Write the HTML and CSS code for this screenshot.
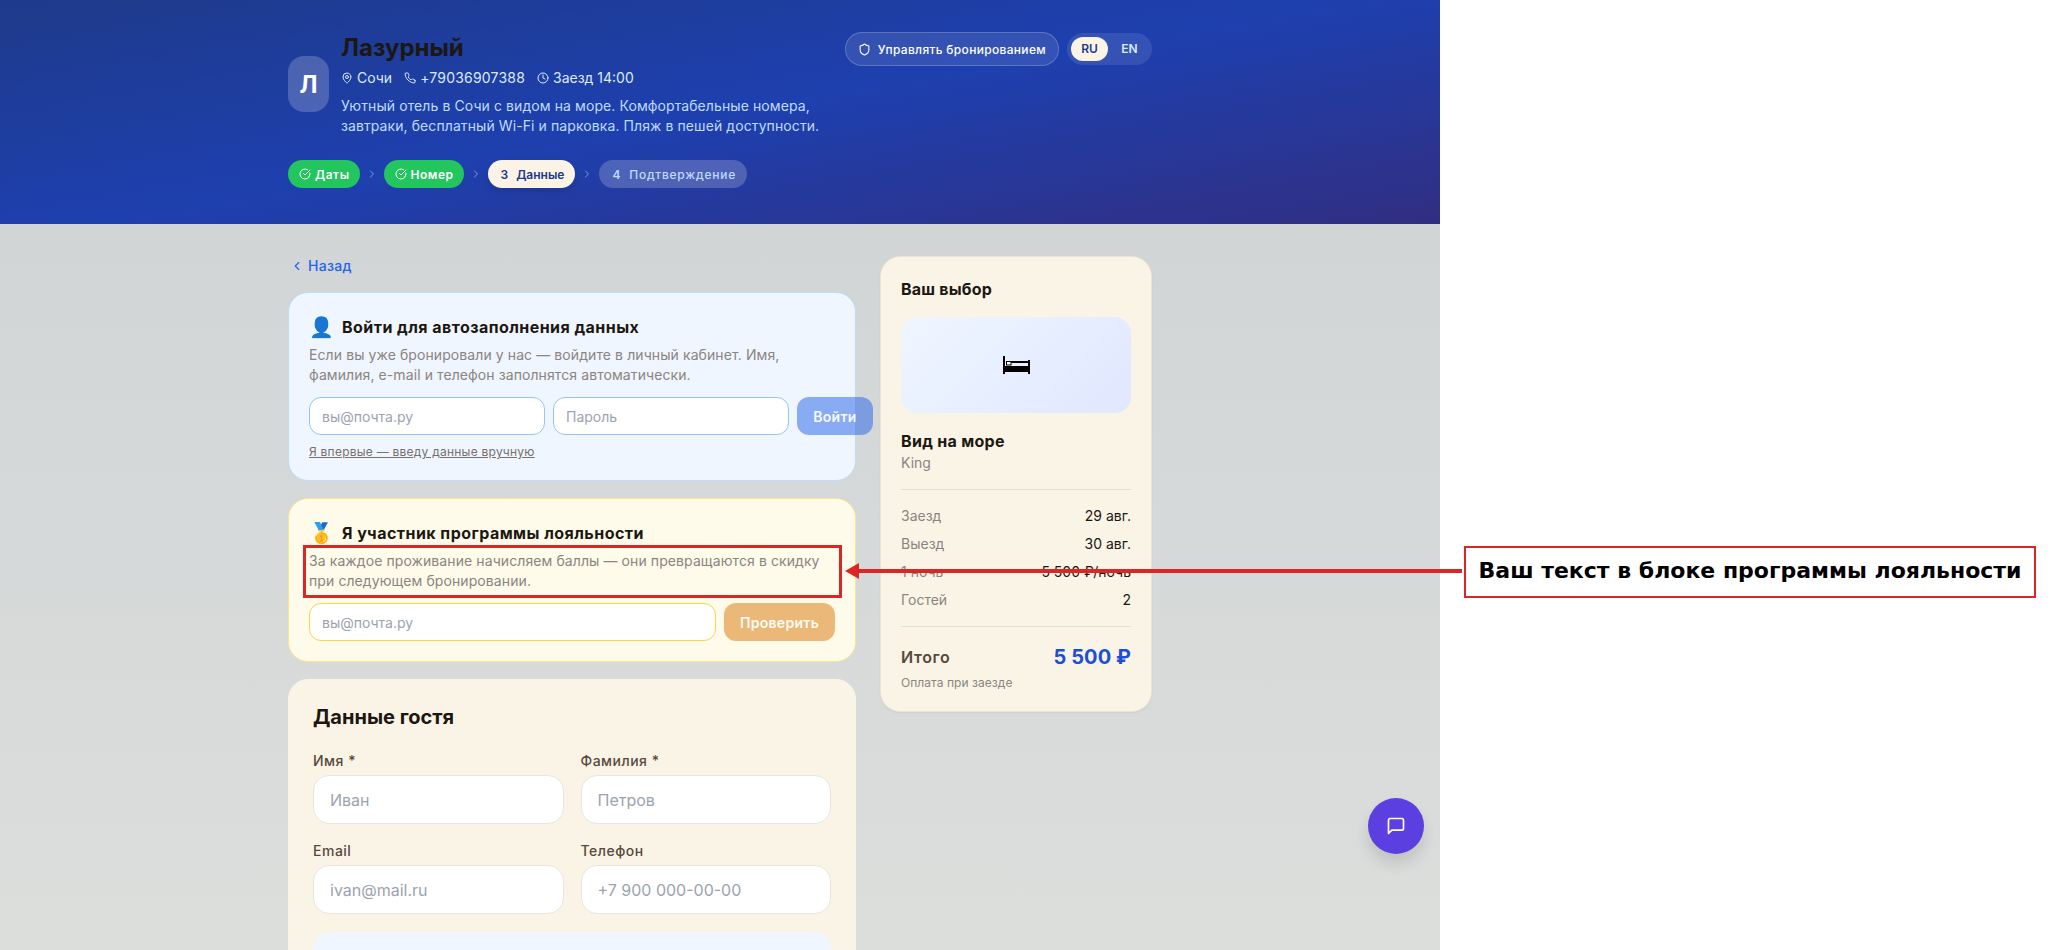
FILE: index.html
```html
<!DOCTYPE html>
<html lang="ru">
<head>
  <meta charset="UTF-8" />
  <meta name="viewport" content="width=device-width, initial-scale=1.0"/>
  <title>Лазурный</title>
  <link rel="stylesheet" href="styles.css">
</head>
<body>

  <div class="app">
    <header class="hero">
      <div class="wrap">
        <div class="hero-top">
          <div class="hotel">
            <div class="avatar">Л</div>
            <div class="hotel-info">
              <h1>Лазурный</h1>
              <div class="meta">
                <span class="meta-item">
                  <svg class="icon" viewBox="0 0 24 24"><path d="M20 10c0 4.993-5.539 10.193-7.399 11.799a1 1 0 0 1-1.202 0C9.539 20.193 4 14.993 4 10a8 8 0 0 1 16 0"/><circle cx="12" cy="10" r="3"/></svg>
                  Сочи
                </span>
                <span class="meta-item phone">
                  <svg class="icon" viewBox="0 0 24 24"><path d="M22 16.92v3a2 2 0 0 1-2.18 2 19.79 19.79 0 0 1-8.63-3.07 19.5 19.5 0 0 1-6-6 19.79 19.79 0 0 1-3.07-8.67A2 2 0 0 1 4.11 2h3a2 2 0 0 1 2 1.72 12.84 12.84 0 0 0 .7 2.81 2 2 0 0 1-.45 2.11L8.09 9.91a16 16 0 0 0 6 6l1.27-1.27a2 2 0 0 1 2.11-.45 12.84 12.84 0 0 0 2.81.7A2 2 0 0 1 22 16.92z"/></svg>
                  +79036907388
                </span>
                <span class="meta-item">
                  <svg class="icon" viewBox="0 0 24 24"><circle cx="12" cy="12" r="10"/><polyline points="12 6 12 12 16 14"/></svg>
                  Заезд 14:00
                </span>
              </div>
              <p class="hotel-desc">Уютный отель в Сочи с видом на море. Комфортабельные номера, завтраки, бесплатный Wi-Fi и парковка. Пляж в пешей доступности.</p>
            </div>
          </div>
          <div class="hero-actions">
            <a class="manage-btn">
              <svg class="icon" viewBox="0 0 24 24"><path d="M20 13c0 5-3.5 7.5-7.66 8.95a1 1 0 0 1-.67-.01C7.5 20.5 4 18 4 13V6a1 1 0 0 1 1-1c2 0 4.5-1.2 6.24-2.72a1.17 1.17 0 0 1 1.52 0C14.51 3.81 17 5 19 5a1 1 0 0 1 1 1z"/></svg>
              Управлять бронированием
            </a>
            <div class="lang">
              <span class="lang-item active">RU</span>
              <span class="lang-item">EN</span>
            </div>
          </div>
        </div>

        <div class="steps">
          <span class="step done">
            <svg class="icon" viewBox="0 0 24 24"><path d="M21.801 10A10 10 0 1 1 17 3.335"/><path d="m9 11 3 3L22 4"/></svg>
            Даты
          </span>
          <svg class="icon step-arrow" viewBox="0 0 24 24"><path d="m9 18 6-6-6-6"/></svg>
          <span class="step done">
            <svg class="icon" viewBox="0 0 24 24"><path d="M21.801 10A10 10 0 1 1 17 3.335"/><path d="m9 11 3 3L22 4"/></svg>
            Номер
          </span>
          <svg class="icon step-arrow" viewBox="0 0 24 24"><path d="m9 18 6-6-6-6"/></svg>
          <span class="step current"><b>3</b> Данные</span>
          <svg class="icon step-arrow" viewBox="0 0 24 24"><path d="m9 18 6-6-6-6"/></svg>
          <span class="step todo"><b>4</b> Подтверждение</span>
        </div>
      </div>
    </header>

    <main class="wrap content">
      <div class="main-col">
        <a class="back">
          <svg class="icon" viewBox="0 0 24 24"><path d="m15 18-6-6 6-6"/></svg>
          Назад
        </a>

        <section class="card login-card">
          <div class="card-title"><span class="emoji">👤</span> Войти для автозаполнения данных</div>
          <p class="card-text">Если вы уже бронировали у нас — войдите в личный кабинет. Имя, фамилия, e-mail и телефон заполнятся автоматически.</p>
          <div class="login-row">
            <input type="email" placeholder="вы@почта.ру">
            <input type="password" placeholder="Пароль">
            <button type="button" class="btn-blue">Войти</button>
          </div>
          <a class="manual-link">Я впервые — введу данные вручную</a>
        </section>

        <section class="card loyalty-card">
          <div class="card-title"><span class="emoji">🥇</span> Я участник программы лояльности</div>
          <p class="card-text">За каждое проживание начисляем баллы — они превращаются в скидку при следующем бронировании.</p>
          <div class="loyalty-row">
            <input type="email" placeholder="вы@почта.ру">
            <button type="button" class="btn-amber">Проверить</button>
          </div>
        </section>

        <section class="card guest-card">
          <h2>Данные гостя</h2>
          <div class="form-grid">
            <label>Имя *<input type="text" placeholder="Иван"></label>
            <label>Фамилия *<input type="text" placeholder="Петров"></label>
            <label>Email<input type="email" placeholder="ivan@mail.ru"></label>
            <label>Телефон<input type="tel" placeholder="+7 900 000-00-00"></label>
          </div>
          <div class="guest-note"></div>
        </section>
      </div>

      <aside class="summary">
        <h3>Ваш выбор</h3>
        <div class="room-pic">
          <svg class="bed" viewBox="0 0 27 18">
            <rect x="0" y="0" width="2" height="18"/>
            <rect x="25" y="4" width="2" height="14"/>
            <rect x="0" y="10" width="27" height="6"/>
            <rect x="8" y="5" width="17" height="2"/>
            <rect class="pillow" x="3.5" y="5.5" width="4.5" height="3.5"/>
          </svg>
        </div>
        <div class="room-name">Вид на море</div>
        <div class="room-bed">King</div>
        <div class="rows">
          <div class="row"><span>Заезд</span><span class="val">29 авг.</span></div>
          <div class="row"><span>Выезд</span><span class="val">30 авг.</span></div>
          <div class="row"><span>1 ночь</span><span class="val">5 500 ₽/ночь</span></div>
          <div class="row"><span>Гостей</span><span class="val">2</span></div>
        </div>
        <div class="total">
          <span>Итого</span>
          <span class="total-sum">5 500 ₽</span>
        </div>
        <div class="pay-note">Оплата при заезде</div>
      </aside>
    </main>

    <button type="button" class="chat-btn">
      <svg class="icon" viewBox="0 0 24 24"><path d="M21 15a2 2 0 0 1-2 2H7l-4 4V5a2 2 0 0 1 2-2h14a2 2 0 0 1 2 2z"/></svg>
    </button>
  </div>

  <!-- annotation drawn over the screenshot -->
  <div class="note-frame"></div>
  <div class="note-line"></div>
  <div class="note-head"></div>
  <div class="note-label">Ваш текст в блоке программы лояльности</div>

</body>
</html>
```

FILE: styles.css
```css
* {
  box-sizing: border-box;
}

html, body {
  margin: 0;
  height: 950px;
  overflow: hidden;
  background: #fff;
}

body {
  position: relative;
  font-family: Inter, "Noto Sans", sans-serif;
  color: #1c1710;
  letter-spacing: 0.09px;
}

.app {
  position: relative;
  width: 1440px;
  height: 950px;
  overflow: hidden;
  background: linear-gradient(180deg, #d1d5d6 224px, #dcdedc 950px);
}

.wrap {
  width: 864px;
  margin: 0 auto;
}

.icon {
  width: 12px;
  height: 12px;
  flex: none;
  fill: none;
  stroke: currentColor;
  stroke-width: 2;
  stroke-linecap: round;
  stroke-linejoin: round;
}

/* header */
.hero {
  height: 224px;
  padding-top: 32px;
  background: linear-gradient(170deg, #1e3a8a 0%, #1e40af 50%, #312e81 100%);
}

.hero-top {
  display: flex;
  justify-content: space-between;
  align-items: flex-start;
}

.hotel {
  display: flex;
  align-items: center;
  gap: 12px;
}

.avatar {
  width: 41px;
  height: 56px;
  border-radius: 16px;
  background: rgba(255,255,255,0.2);
  color: #fff;
  font-size: 24px;
  font-weight: 700;
  display: flex;
  align-items: center;
  justify-content: center;
}

h1 {
  margin: 0;
  font-size: 24px;
  line-height: 32px;
  font-weight: 700;
  letter-spacing: 0;
  color: #1c1710;
}

.meta {
  display: flex;
  gap: 12px;
  margin-top: 4px;
  font-size: 14px;
  line-height: 20px;
  letter-spacing: 0;
  color: #dbeafe;
}

.meta-item {
  display: flex;
  align-items: center;
  gap: 4px;
}

.phone {
  letter-spacing: 0.2px;
}

.hotel-desc {
  width: 490px;
  margin: 8px 0 0;
  font-size: 14px;
  line-height: 20px;
  color: #bfdbfe;
}

.hero-actions {
  display: flex;
  align-items: center;
  gap: 8px;
}

.manage-btn {
  display: flex;
  align-items: center;
  gap: 7px;
  height: 34px;
  padding: 0 12px;
  border: 1px solid rgba(255,255,255,0.2);
  border-radius: 17px;
  background: rgba(255,255,255,0.1);
  color: #fff;
  font-size: 12px;
  font-weight: 500;
  letter-spacing: 0.32px;
}

.manage-btn .icon {
  width: 13px;
  height: 13px;
}

.lang {
  display: flex;
  align-items: center;
  gap: 3px;
  height: 32px;
  padding: 4px;
  border-radius: 16px;
  background: rgba(255,255,255,0.1);
  font-size: 12px;
  font-weight: 600;
  letter-spacing: 0;
  color: #dbeafe;
}

.lang-item {
  width: 37px;
  height: 24px;
  line-height: 24px;
  text-align: center;
  border-radius: 12px;
}

.lang-item.active {
  background: #faf3e6;
  color: #1e3a8a;
}

.steps {
  display: flex;
  align-items: center;
  gap: 6px;
  margin-top: 24px;
}

.step {
  display: flex;
  align-items: center;
  gap: 4px;
  height: 28px;
  padding: 0 10px 0 11px;
  border-radius: 14px;
  font-size: 12px;
  font-weight: 600;
  letter-spacing: 0.5px;
}

.step b {
  margin-right: 4px;
  font-weight: 600;
}

.step.done {
  background: #22c55e;
  color: #fff;
}

.step.current {
  padding: 0 11px 0 13px;
  background: #faf3e6;
  color: #1e3a8a;
  letter-spacing: 0;
  box-shadow: 0 4px 6px rgba(0,0,0,0.1);
}

.step.todo {
  padding: 0 11px 0 13px;
  background: rgba(255,255,255,0.2);
  color: #bfdbfe;
  font-weight: 500;
  letter-spacing: 0.75px;
}

.step-arrow {
  color: rgba(191,219,254,0.6);
}

/* content */
.content {
  display: grid;
  grid-template-columns: 568px 272px;
  gap: 24px;
  align-items: start;
  padding-top: 32px;
}

.back {
  display: flex;
  align-items: center;
  gap: 4px;
  height: 19px;
  margin-bottom: 17px;
  padding-left: 2px;
  font-size: 14px;
  font-weight: 500;
  letter-spacing: 0.3px;
  color: #2563eb;
}

.back .icon {
  width: 14px;
  height: 14px;
}

.card {
  margin-bottom: 17px;
  padding: 20px;
  border: 1px solid transparent;
  border-radius: 20px;
}

.card-title {
  display: flex;
  align-items: center;
  gap: 8px;
  height: 28px;
  font-size: 16px;
  line-height: 28px;
  font-weight: 700;
  letter-spacing: 0.45px;
  color: #1c1710;
}

.emoji {
  font-size: 20px;
  letter-spacing: 0;
}

.card-text {
  margin: 4px 0 12px;
  font-size: 14px;
  line-height: 20px;
  color: #8a8580;
}

input {
  height: 38px;
  padding: 0 12px;
  border: 1px solid #e5e2dc;
  border-radius: 12px;
  background: #fff;
  font-family: inherit;
  font-size: 14px;
}

input::placeholder {
  color: #9ca3af;
}

button {
  height: 38px;
  border: none;
  border-radius: 12px;
  font-family: inherit;
  font-size: 14px;
  font-weight: 600;
  letter-spacing: 0.3px;
  color: #fff;
}

.login-card {
  background: #eff6ff;
  border-color: #bfdbfe;
}

.login-row {
  display: flex;
  gap: 8px;
}

.login-row input {
  flex: none;
  width: 236px;
  border-color: #93c5fd;
}

.btn-blue {
  flex: none;
  width: 76px;
  background: #2563eb;
  opacity: 0.5;
}

.manual-link {
  display: block;
  margin-top: 8px;
  font-size: 12px;
  line-height: 17px;
  letter-spacing: 0.24px;
  color: #78716c;
  text-decoration: underline;
}

.loyalty-card {
  background: #fffbeb;
  border-color: #fde68a;
}

.loyalty-row {
  display: flex;
  gap: 8px;
}

.loyalty-row input {
  flex: 1;
  min-width: 0;
  border-color: #fcd34d;
}

.btn-amber {
  flex: none;
  width: 111px;
  background: #d97706;
  opacity: 0.5;
}

.guest-card {
  padding: 23px 24px 24px;
  background: #faf4e7;
  border-color: #faf4e7;
}

.guest-card h2 {
  margin: 0 0 20px;
  font-size: 20px;
  line-height: 28px;
  font-weight: 700;
  letter-spacing: 0;
  color: #1c1710;
}

.form-grid {
  display: grid;
  grid-template-columns: 1fr 1fr;
  gap: 17px;
}

.form-grid label {
  display: block;
  font-size: 14px;
  line-height: 20px;
  font-weight: 500;
  letter-spacing: 0.5px;
  color: #57493c;
}

.form-grid input {
  display: block;
  width: 100%;
  height: 49px;
  margin-top: 4px;
  padding: 0 16px;
  border-color: #ebe6dd;
  border-radius: 16px;
  font-size: 16px;
  font-weight: 400;
  letter-spacing: 0;
}

.guest-note {
  height: 120px;
  margin-top: 18px;
  border-radius: 16px;
  background: #eff6ff;
}

/* summary */
.summary {
  padding: 20px;
  border: 1px solid #ebe3d3;
  border-radius: 20px;
  background: #faf4e7;
  box-shadow: 0 1px 2px rgba(0,0,0,0.05);
}

.summary h3 {
  margin: 0 0 16px;
  font-size: 16px;
  line-height: 24px;
  font-weight: 700;
  letter-spacing: 0.2px;
}

.room-pic {
  height: 96px;
  border-radius: 16px;
  background: linear-gradient(135deg, #eff6ff, #e0e7ff);
  display: flex;
  align-items: center;
  justify-content: center;
}

.bed {
  width: 27px;
  height: 18px;
  fill: #000;
}

.bed .pillow {
  fill: #fff;
  stroke: #000;
  stroke-width: 1;
}

.room-name {
  margin-top: 16px;
  font-size: 16px;
  line-height: 24px;
  font-weight: 700;
  letter-spacing: 0.3px;
}

.room-bed {
  font-size: 14px;
  line-height: 20px;
  letter-spacing: 0;
  color: #8a8580;
}

.rows {
  display: flex;
  flex-direction: column;
  gap: 8px;
  margin-top: 16px;
  padding: 16px 0;
  border-top: 1px solid #e5ddcf;
  border-bottom: 1px solid #e5ddcf;
  font-size: 14px;
  line-height: 20px;
  letter-spacing: 0;
  color: #8a8580;
}

.row {
  display: flex;
  justify-content: space-between;
}

.val {
  color: #1c1710;
}

.total {
  display: flex;
  justify-content: space-between;
  align-items: center;
  height: 28px;
  margin-top: 16px;
  font-size: 16px;
  font-weight: 600;
  letter-spacing: 0.6px;
  color: #57493c;
}

.total-sum {
  font-size: 20px;
  font-weight: 700;
  letter-spacing: 0.1px;
  color: #1d4ed8;
}

.pay-note {
  margin-top: 4px;
  font-size: 12px;
  line-height: 16px;
  letter-spacing: 0.05px;
  color: #8a8580;
}

.chat-btn {
  position: absolute;
  right: 16px;
  bottom: 96px;
  width: 56px;
  height: 56px;
  border-radius: 50%;
  background: #5b3fe0;
  color: #fff;
  display: flex;
  align-items: center;
  justify-content: center;
  box-shadow: 0 10px 15px rgba(0,0,0,0.12);
}

.chat-btn .icon {
  width: 20px;
  height: 20px;
}

/* annotation */
.note-frame {
  position: absolute;
  left: 303px;
  top: 545px;
  width: 539px;
  height: 53px;
  border: 3px solid #dc2626;
}

.note-line {
  position: absolute;
  left: 855px;
  top: 569px;
  width: 607px;
  height: 4px;
  background: #dc2626;
}

.note-head {
  position: absolute;
  left: 845px;
  top: 562.5px;
  border-right: 14px solid #dc2626;
  border-top: 8.5px solid transparent;
  border-bottom: 8.5px solid transparent;
}

.note-label {
  position: absolute;
  left: 1464px;
  top: 546px;
  width: 572px;
  height: 52px;
  border: 2px solid #dc2626;
  background: #fff;
  font-family: "DejaVu Sans", sans-serif;
  font-size: 22px;
  font-weight: 700;
  letter-spacing: 0;
  line-height: 45px;
  text-align: center;
  color: #000;
}
```
